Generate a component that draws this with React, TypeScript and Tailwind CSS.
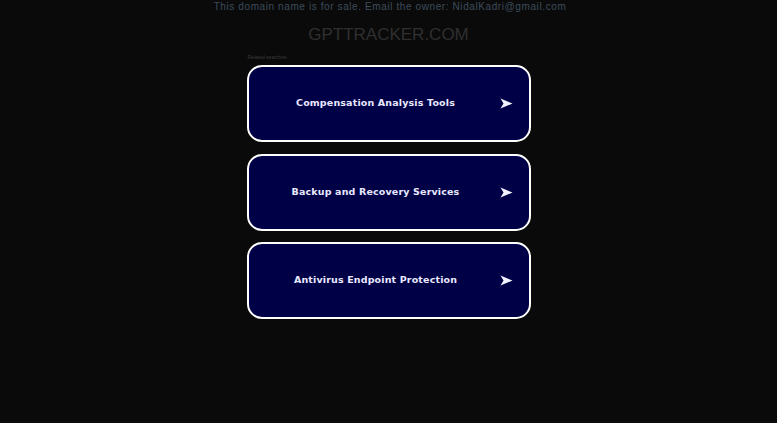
import React from "react";

const links = [
  "Compensation Analysis Tools",
  "Backup and Recovery Services",
  "Antivirus Endpoint Protection",
];

function Arrow() {
  return (
    <svg width="13" height="11" viewBox="0 0 13 11" className="block">
      <path d="M0.5 0.5 L12.5 5.5 L0.5 10.5 L3.5 5.5 Z" fill="#f2f2ff" />
    </svg>
  );
}

export default function App() {
  return (
    <div className="min-h-[423px] w-full bg-[#0a0a0a] font-['Liberation_Sans',Arial,sans-serif]">
      <p className="pt-[1px] pl-[3px] text-center text-[10px] leading-[12px] tracking-[0.6px] text-[#3d4c5c]">
        This domain name is for sale. Email the owner: NidalKadri@gmail.com
      </p>
      <h1 className="mt-[12px] text-center text-[17px] leading-[20px] text-[#2f2f2f]">GPTTRACKER.COM</h1>
      <div className="mx-auto mt-[9px] w-[284px]">
        <p className="pl-[1px] text-[5px] leading-[6px] text-[#3a3a3a]">Related searches</p>
        <div className="mt-[5px] flex flex-col gap-[11.5px]">
          {links.map((label) => (
            <a
              key={label}
              href="#"
              className="flex h-[77px] items-center rounded-[15px] border-2 border-white bg-[#000046] pl-[18px] pr-[16px]"
            >
              <span className="flex-1 text-center font-['DejaVu_Sans',Verdana,sans-serif] text-[9.5px] font-bold tracking-[0.15px] text-[#e8e8ff]">
                {label}
              </span>
              <span className="flex w-[28px] justify-end">
                <Arrow />
              </span>
            </a>
          ))}
        </div>
      </div>
    </div>
  );
}
